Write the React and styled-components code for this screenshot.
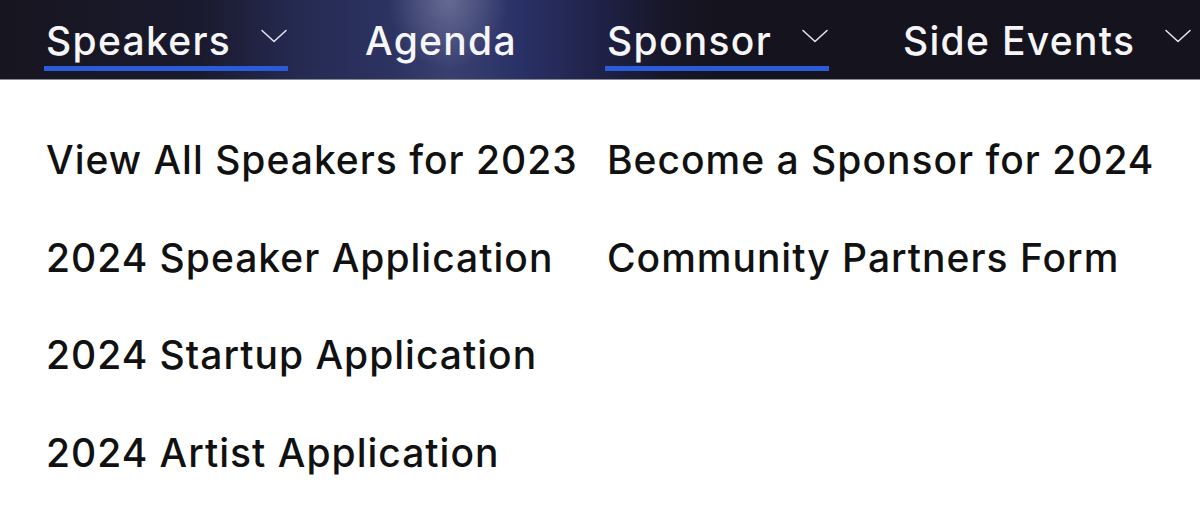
import styled, { createGlobalStyle } from 'styled-components'

const GlobalStyle = createGlobalStyle`
    html, body {
        margin: 0;
        padding: 0;
        background: #ffffff;
    }
    body {
        font-family: Inter, "Open Sans", "Liberation Sans", sans-serif;
    }
`

const COLUMNS = '319px 242px 296px 1fr'

const menu = [
    { key: 'speakers', label: 'Speakers', dropdown: true, active: true },
    { key: 'agenda', label: 'Agenda' },
    { key: 'sponsor', label: 'Sponsor', dropdown: true, active: true },
    { key: 'side', label: 'Side Events', dropdown: true },
]

const columns = [
    {
        key: 'speakers',
        items: [
            'View All Speakers for 2023',
            '2024 Speaker Application',
            '2024 Startup Application',
            '2024 Artist Application',
        ],
    },
    {
        key: 'sponsor',
        items: ['Become a Sponsor for 2024', 'Community Partners Form'],
    },
]

const Chevron = () => (
    <ChevronSvg viewBox="0 0 26 14" fill="none">
        <path d="M1 1.5 L13 12.5 L25 1.5" stroke="currentColor" strokeWidth="1.6" strokeLinecap="round" strokeLinejoin="round" />
    </ChevronSvg>
)

const App = () => {
    return (
        <>
            <GlobalStyle />
            <Page>
                <NavBar>
                    {menu.map((item) => (
                        <NavItem key={item.key} $active={item.active}>
                            <NavLabel>{item.label}</NavLabel>
                            {item.dropdown && <Chevron />}
                        </NavItem>
                    ))}
                </NavBar>
                <Dropdown>
                    {columns.map((col) => (
                        <MenuColumn key={col.key}>
                            {col.items.map((label) => (
                                <MenuLink key={label}>{label}</MenuLink>
                            ))}
                        </MenuColumn>
                    ))}
                </Dropdown>
            </Page>
        </>
    )
}

const Page = styled.div`
    width: 1200px;
    height: 506px;
    overflow: hidden;
    background: #ffffff;
`

const NavBar = styled.nav`
    height: 80px;
    box-sizing: border-box;
    padding-left: 46px;
    display: grid;
    grid-template-columns: ${COLUMNS};
    align-items: start;
    border-bottom: 1px solid #8a8a94;
    background:
        radial-gradient(ellipse 60px 70px at 448px 0px, rgba(120, 124, 160, 0.7), rgba(120, 124, 160, 0) 100%),
        linear-gradient(90deg,
            #17151f 0px,
            #1a1a2e 200px,
            #252a52 300px,
            #2e3463 400px,
            #394070 450px,
            #2a3166 520px,
            #1f2248 600px,
            #18172a 660px,
            #15131d 720px,
            #15131d 1200px);
    color: #f6f6f8;
`

const NavItem = styled.div`
    justify-self: start;
    display: flex;
    align-items: center;
    gap: 30px;
    height: 71px;
    box-sizing: border-box;
    margin-left: -2px;
    padding: 0 1px 0 2px;
    border-bottom: 5px solid ${({ $active }) => ($active ? '#2a5bd8' : 'transparent')};
`

const NavLabel = styled.span`
    font-size: 39px;
    font-weight: 500;
    letter-spacing: 1.3px;
    line-height: 1;
    padding-top: 14px;
`

const ChevronSvg = styled.svg`
    width: 26px;
    height: 14px;
    margin-top: 6px;
    color: #e4e4ec;
`

const Dropdown = styled.div`
    padding-left: 46px;
    padding-top: 50px;
    display: grid;
    grid-template-columns: 561px 1fr;
`

const MenuColumn = styled.ul`
    margin: 0;
    padding: 0;
    list-style: none;
    display: flex;
    flex-direction: column;
`

const MenuLink = styled.li`
    font-size: 39px;
    font-weight: 500;
    letter-spacing: 1px;
    color: #111111;
    height: 97.5px;
    line-height: 60px;
    white-space: nowrap;
`

export default App
